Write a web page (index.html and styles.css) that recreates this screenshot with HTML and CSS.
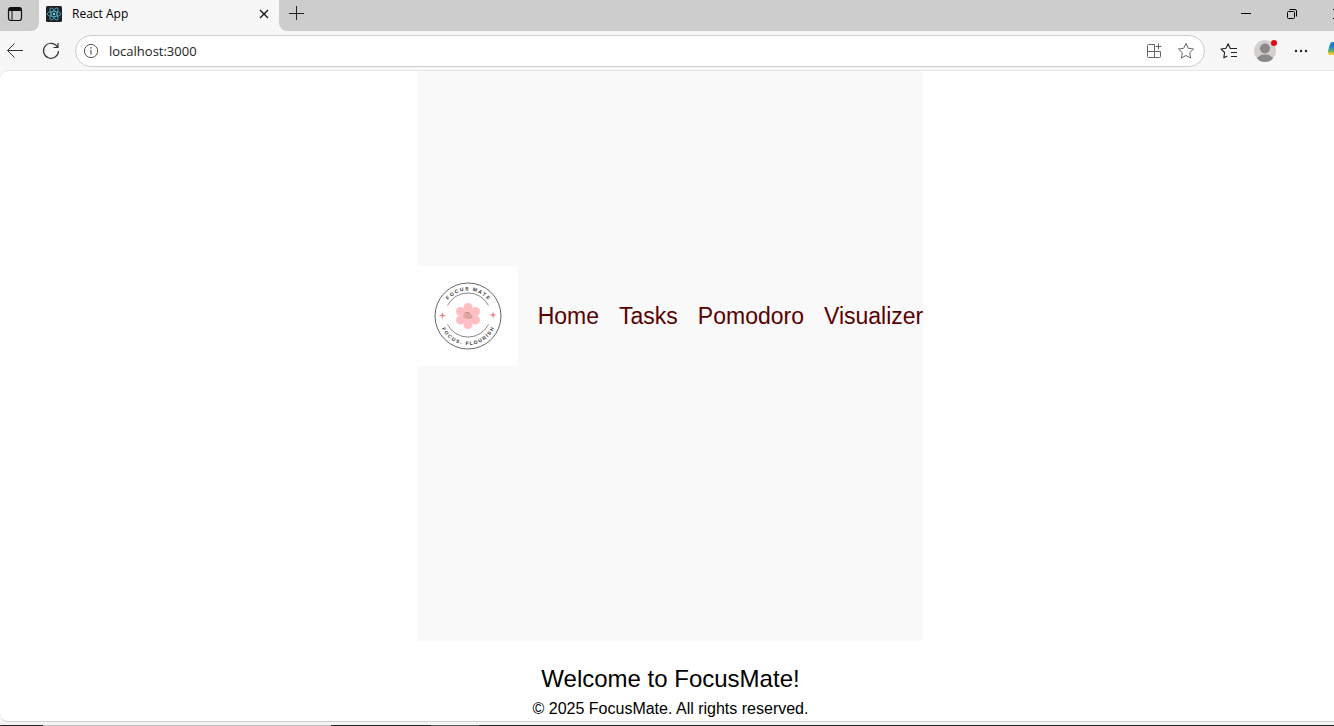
FILE: index.html
```html
<!DOCTYPE html>
<html lang="en">
<head>
<meta charset="utf-8">
<title>React App</title>
<link rel="stylesheet" href="styles.css">
</head>
<body>
<div class="browser">
  <div class="tabbar">
    <button class="workspaces" aria-label="Tab actions">
      <svg width="16" height="16" viewBox="0 0 16 16" fill="none" stroke="#111"><rect x="1.5" y="1.5" width="13" height="13" rx="2.5" stroke-width="1.2"/><path d="M2 3h12" stroke-width="2.5"/><path d="M2 4.5h12M5 5v9" /></svg>
    </button>
    <div class="tab">
      <svg class="favicon" width="16" height="16" viewBox="0 0 16 16" fill="none" stroke="#53b9d1"><rect width="16" height="16" rx="1.5" fill="#202125" stroke="none"/><g stroke-width=".8"><ellipse cx="8" cy="8" rx="6.8" ry="2.6"/><ellipse cx="8" cy="8" rx="6.8" ry="2.6" transform="rotate(60 8 8)"/><ellipse cx="8" cy="8" rx="6.8" ry="2.6" transform="rotate(120 8 8)"/></g><circle cx="8" cy="8" r="1.2" fill="#61dafb" stroke="none"/></svg>
      <span class="tab-title">React App</span>
      <button class="tab-close" aria-label="Close tab">
        <svg width="10" height="10" viewBox="0 0 10 10" stroke="#111" stroke-width="1.3"><path d="M1 1l8 8M9 1l-8 8"/></svg>
      </button>
    </div>
    <button class="new-tab" aria-label="New tab">
      <svg width="16" height="16" viewBox="0 0 16 16" stroke="#222"><path d="M8.5 1v14M1 8.500h15"/></svg>
    </button>
    <div class="window-controls">
      <button aria-label="Minimize"><svg width="12" height="12" viewBox="0 0 12 12" stroke="#000"><path d="M1 5.500h10"/></svg></button>
      <button aria-label="Restore"><svg width="12" height="12" viewBox="0 0 12 12" stroke="#000" fill="none"><rect x="1.500" y="3.500" width="7" height="7" rx="1"/><path d="M3.500 1.500h5.500a1.500 1.500 0 0 1 1.500 1.500v5.500"/></svg></button>
      <button aria-label="Close"><svg width="12" height="12" viewBox="0 0 12 12" stroke="#000"><path d="M1 1l10 10M11 1L1 11"/></svg></button>
    </div>
  </div>

  <div class="toolbar">
    <button class="tool" aria-label="Back"><svg width="18" height="18" viewBox="0 0 18 18" fill="none" stroke="#333"><path d="M17 8.500H1.500M8.500 1.500l-7 7 7 7"/></svg></button>
    <button class="tool" aria-label="Refresh"><svg width="18" height="18" viewBox="0 0 18 18" fill="none" stroke="#333" stroke-width="1.2"><path d="M15.500 5A7.500 7.500 0 1 0 16.500 9M16 1v4.500h-4.500"/></svg></button>
    <div class="address">
      <svg width="16" height="16" viewBox="0 0 16 16" fill="none" stroke="#555"><circle cx="8" cy="8" r="6.600"/><path d="M8 7v4.500" stroke-width="1.2"/><circle cx="8" cy="4.900" r=".8" fill="#555" stroke="none"/></svg>
      <input class="url" type="text" aria-label="Address" value="localhost:3000">
      <button class="inline" aria-label="App available"><svg width="16" height="16" viewBox="0 0 16 16" fill="none" stroke="#666"><path d="M8.500 1.500H2.500a1 1 0 0 0-1 1v11a1 1 0 0 0 1 1h11a1 1 0 0 0 1-1v-5h-13M8.500 1.500v13M12.500 .5v6M9.500 3.500h6"/></svg></button>
      <button class="inline" aria-label="Add to favorites"><svg width="18" height="18" viewBox="0 0 18 18" fill="none" stroke="#666" stroke-linejoin="round"><path d="M9 1.500l2.300 4.800 5.200.7-3.800 3.700.9 5.300L9 13.500 4.400 16l.9-5.300L1.500 7l5.200-.7z"/></svg></button>
    </div>
    <button class="tool" aria-label="Favorites"><svg width="18" height="18" viewBox="0 0 18 18" fill="none" stroke="#222" stroke-width="1.100" stroke-linejoin="round"><path d="M11 6.500h-.7L8.200 1.700 6 6.300l-5 .7 3.600 3.500-.8 5.300 3.500-1.800M10.500 6.500H17M11 10.500h6M11 14.500h6"/></svg></button>
    <button class="tool" aria-label="Profile"><svg width="24" height="24" viewBox="0 0 24 24"><defs><clipPath id="face"><circle cx="12" cy="12" r="11"/></clipPath></defs><circle cx="12" cy="12" r="11" fill="#d2d0ce"/><g clip-path="url(#face)" fill="#8b8886"><circle cx="12" cy="9.500" r="5"/><ellipse cx="12" cy="20.500" rx="8" ry="5"/></g><circle cx="21" cy="4" r="3" fill="#e30613"/></svg></button>
    <button class="tool" aria-label="More"><svg width="16" height="16" viewBox="0 0 16 16" fill="#222"><circle cx="3" cy="8" r="1.200"/><circle cx="8" cy="8" r="1.200"/><circle cx="13" cy="8" r="1.200"/></svg></button>
    <button class="tool" aria-label="Copilot"><svg width="18" height="18" viewBox="0 0 18 18"><defs><linearGradient id="cp" x1="0" y1="0" x2="0" y2="1"><stop offset="0" stop-color="#1683d8"/><stop offset=".3" stop-color="#1683d8"/><stop offset=".55" stop-color="#5caf65"/><stop offset=".75" stop-color="#ffca28"/></linearGradient></defs><path d="M4 0h10l4 8-3 8H9l-3-3H2Q0 13 0 9L2 2Q3 0 4 0z" fill="url(#cp)"/></svg></button>
  </div>

  <div class="page">
    <header class="site-header">
      <svg class="logo" width="100" height="100" viewBox="0 0 100 100" role="img" aria-label="Focus Mate">
        <defs>
          <path id="top-arc" d="M24.500 50a25.500 25.500 0 0 1 51 0"/>
          <path id="bottom-arc" d="M21 50a29 29 0 0 0 58 0"/>
        </defs>
        <rect width="100" height="100" fill="#fff"/>
        <g fill="none" stroke="#555"><circle cx="50" cy="50" r="33" stroke-width=".9"/><path d="M29.500 39.500a23 23 0 0 1 41 0M29.500 58.500a23 23 0 0 0 41 0" stroke-width=".7"/></g>
        <g class="logo-text"><text><textPath href="#top-arc" startOffset="50%">F O C U S &#160; M A T E</textPath></text><text><textPath href="#bottom-arc" startOffset="50%">F O C U S . &#160; F L O U R I S H</textPath></text></g>
        <g fill="#ffbfc2"><circle cx="50" cy="41.500" r="4.500"/><circle cx="57.500" cy="45.500" r="4.500"/><circle cx="57.500" cy="54" r="4.500"/><circle cx="50" cy="58.500" r="4.500"/><circle cx="42.500" cy="54" r="4.500"/><circle cx="42.500" cy="45.500" r="4.500"/><circle cx="50" cy="50" r="6"/></g>
        <g fill="none"><path d="M45 50q2-5 5-4t5 5q-2 3-5 2t-5-3" fill="#e6a7a4"/><path d="M46 48l3 3 2-4 2 4M45 51l4 1 5-1" stroke="#c09a8c" stroke-width=".6"/><path d="M47 46.500h4" stroke="#b8737a" stroke-width=".6"/></g>
        <g fill="#f4777c"><path d="M24.500 46l.8 2.700 2.700.8-2.700.8-.8 2.700-.8-2.700-2.700-.8 2.700-.8zM75 45.500l.8 2.700 2.700.8-2.700.8-.8 2.700-.8-2.700-2.700-.8 2.700-.8z"/></g>
      </svg>
      <nav class="nav">
        <a href="#home">Home</a>
        <a href="#tasks">Tasks</a>
        <a href="#pomodoro">Pomodoro</a>
        <a href="#visualizer">Visualizer</a>
      </nav>
    </header>
    <main class="welcome">Welcome to FocusMate!</main>
    <footer class="footer">© 2025 FocusMate. All rights reserved.</footer>
  </div>
  <div class="edge"><span class="edge-a"></span><span class="edge-b"></span><span class="edge-c"></span><span class="edge-d"></span><span class="edge-e"></span></div>
</div>
</body>
</html>
```

FILE: styles.css
```css
* { box-sizing: border-box; }

body {
  margin: 0;
  overflow: hidden;
  font-family: "Liberation Sans", Arial, sans-serif;
  color: #000;
}

button {
  display: flex;
  align-items: center;
  justify-content: center;
  padding: 0;
  border: 0;
  background: none;
  flex: none;
}

svg { flex: none; }

/* The window runs past the right edge of the screen. */
.browser {
  display: flex;
  flex-direction: column;
  height: 100vh;
  margin-right: -27px;
  background: #f7f7f7;
}

.tabbar {
  display: flex;
  height: 31px;
  background: linear-gradient(#f7f7f7, #f7f7f7) 20px 0 / 270px 100% no-repeat, #cdcdcd;
}

.workspaces {
  width: 39px;
  padding: 0 9px 4px 0;
  background: #cdcdcd;
  border-bottom-right-radius: 8px;
}

.tab {
  display: flex;
  align-items: center;
  width: 240px;
  padding: 0 10px 4px 7px;
  background: #f7f7f7;
}

.tab-title {
  flex: 1;
  margin-left: 10px;
  font: 12px/16px "Open Sans", "Noto Sans", sans-serif;
}

.tab-close {
  width: 10px;
  height: 16px;
}

.new-tab {
  width: 36px;
  padding: 0 2px 6px 0;
  background: #cdcdcd;
  border-bottom-left-radius: 8px;
}

.window-controls {
  display: flex;
  margin-left: auto;
}

.window-controls button {
  width: 46px;
  padding-bottom: 3px;
}

.toolbar {
  display: flex;
  align-items: center;
  height: 39px;
  padding: 1px 6px 0 0;
}

.tool {
  width: 36px;
  height: 32px;
}

.toolbar > .tool:first-child {
  width: 33px;
  padding-right: 4px;
}

.address {
  display: flex;
  flex: 1;
  align-items: center;
  height: 32px;
  margin: 0 6px;
  padding: 0 2px 0 7px;
  background: #fff;
  border: 1px solid #cdcdcd;
  border-radius: 16px;
}

.url {
  flex: 1;
  min-width: 0;
  margin-left: 10px;
  padding: 0;
  border: 0;
  outline: 0;
  background: none;
  color: #222;
  font: 13px/20px "Open Sans", "Noto Sans", sans-serif;
}

.inline {
  width: 32px;
  height: 28px;
}

.page {
  display: flex;
  flex: 1;
  flex-direction: column;
  align-items: center;
  padding: 0 20px 3px 0;
  background: #fff;
  border: 1px solid #e5e5e5;
  border-width: 1px 0;
  border-bottom-color: #d0d0d0;
  border-radius: 8px 0 0 8px;
}

.site-header {
  display: flex;
  flex: 1;
  align-items: center;
  gap: 20px;
  padding-bottom: 80px;
  background: #f9f9f9;
}

.logo { display: block; }

.logo-text {
  fill: #333;
  font-size: 5px;
  font-weight: bold;
  text-anchor: middle;
}

.nav {
  display: flex;
  gap: 20px;
}

.nav a {
  color: #580000;
  font-size: 23px;
  line-height: 28px;
  text-decoration: none;
}

.welcome {
  margin-top: 24px;
  font-size: 24px;
  line-height: 28px;
}

.footer {
  margin-top: 7px;
  font-size: 16px;
  line-height: 18px;
}

.edge {
  display: flex;
  height: 4px;
  padding-top: 3px;
  background: #f3f4f3;
}

.edge-a { width: 43px; background: #2a2525; }
.edge-b { width: 288px; background: #bdbdbd; }
.edge-c { width: 100px; background: #242929; }
.edge-d { width: 48px; background: #555957; }
.edge-e { flex: 1; background: #202b29; }
```
